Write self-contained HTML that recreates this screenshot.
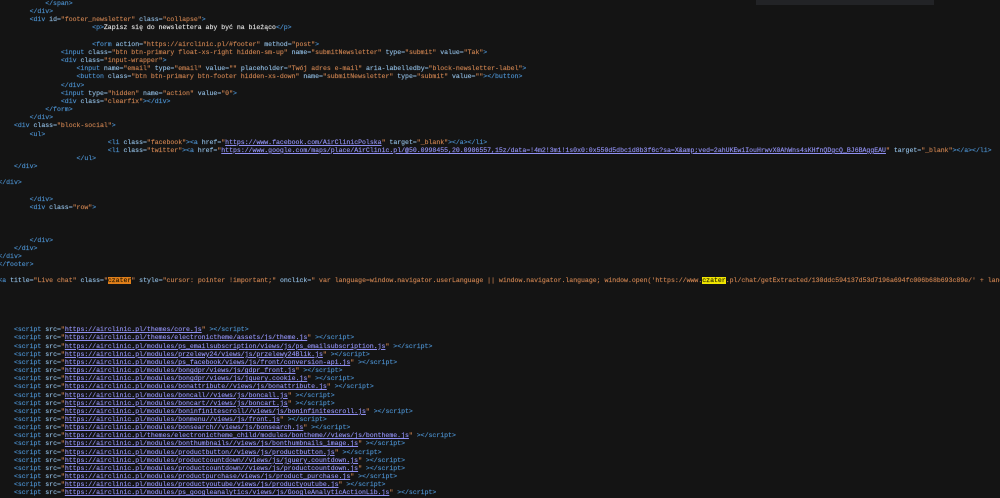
<!DOCTYPE html>
<html><head><meta charset="utf-8"><style>
html,body{margin:0;padding:0;background:#141414;width:1000px;height:497px;overflow:hidden;}
pre{position:absolute;left:-1.7px;top:0px;margin:0;font-family:"Liberation Mono",monospace;font-size:6.53px;line-height:8.15px;color:#d4d4d4;white-space:pre;-webkit-text-stroke:0.15px currentColor;}
.t{color:#4b8fcc}.a{color:#8fbadf}.v{color:#c9804f}.l{color:#8f8ff0;text-decoration:underline}
.w{color:#e0e0e0}
.h1{background:#e07f1a;color:#2a1a00}.h2{background:#f2e600;color:#2a2a00}
#panel{position:absolute;left:756px;top:0;width:178px;height:5px;background:#222326;}
</style></head><body>
<div id="panel"></div>
<pre>            <span class="t">&lt;/span&gt;</span>
        <span class="t">&lt;/div&gt;</span>
        <span class="t">&lt;div</span> <span class="a">id=</span><span class="v">"footer_newsletter"</span> <span class="a">class=</span><span class="v">"collapse"</span><span class="t">&gt;</span>
                        <span class="t">&lt;p&gt;</span><span class="w">Zapisz się do newslettera aby być na bieżąco</span><span class="t">&lt;/p&gt;</span>

                        <span class="t">&lt;form</span> <span class="a">action=</span><span class="v">"https://airclinic.pl/#footer"</span> <span class="a">method=</span><span class="v">"post"</span><span class="t">&gt;</span>
                <span class="t">&lt;input</span> <span class="a">class=</span><span class="v">"btn btn-primary float-xs-right hidden-sm-up"</span> <span class="a">name=</span><span class="v">"submitNewsletter"</span> <span class="a">type=</span><span class="v">"submit"</span> <span class="a">value=</span><span class="v">"Tak"</span><span class="t">&gt;</span>
                <span class="t">&lt;div</span> <span class="a">class=</span><span class="v">"input-wrapper"</span><span class="t">&gt;</span>
                    <span class="t">&lt;input</span> <span class="a">name=</span><span class="v">"email"</span> <span class="a">type=</span><span class="v">"email"</span> <span class="a">value=</span><span class="v">""</span> <span class="a">placeholder=</span><span class="v">"Twój adres e-mail"</span> <span class="a">aria-labelledby=</span><span class="v">"block-newsletter-label"</span><span class="t">&gt;</span>
                    <span class="t">&lt;button</span> <span class="a">class=</span><span class="v">"btn btn-primary btn-footer hidden-xs-down"</span> <span class="a">name=</span><span class="v">"submitNewsletter"</span> <span class="a">type=</span><span class="v">"submit"</span> <span class="a">value=</span><span class="v">""</span><span class="t">&gt;&lt;/button&gt;</span>
                <span class="t">&lt;/div&gt;</span>
                <span class="t">&lt;input</span> <span class="a">type=</span><span class="v">"hidden"</span> <span class="a">name=</span><span class="v">"action"</span> <span class="a">value=</span><span class="v">"0"</span><span class="t">&gt;</span>
                <span class="t">&lt;div</span> <span class="a">class=</span><span class="v">"clearfix"</span><span class="t">&gt;&lt;/div&gt;</span>
            <span class="t">&lt;/form&gt;</span>
        <span class="t">&lt;/div&gt;</span>
    <span class="t">&lt;div</span> <span class="a">class=</span><span class="v">"block-social"</span><span class="t">&gt;</span>
        <span class="t">&lt;ul&gt;</span>
                            <span class="t">&lt;li</span> <span class="a">class=</span><span class="v">"facebook"</span><span class="t">&gt;&lt;a</span> <span class="a">href=</span><span class="v">"</span><span class="l">https://www.facebook.com/AirClinicPolska</span><span class="v">"</span> <span class="a">target=</span><span class="v">"_blank"</span><span class="t">&gt;&lt;/a&gt;&lt;/li&gt;</span>
                            <span class="t">&lt;li</span> <span class="a">class=</span><span class="v">"twitter"</span><span class="t">&gt;&lt;a</span> <span class="a">href=</span><span class="v">"</span><span class="l">https://www.google.com/maps/place/AirClinic.pl/@50.0998455,20.0986557,15z/data=!4m2!3m1!1s0x0:0x550d5dbc1d8b3f6c?sa=X&amp;amp;ved=2ahUKEwiIouHrwvX0AhWns4sKHfnQDgcQ_BJ6BAggEAU</span><span class="v">"</span> <span class="a">target=</span><span class="v">"_blank"</span><span class="t">&gt;&lt;/a&gt;&lt;/li&gt;</span>
                    <span class="t">&lt;/ul&gt;</span>
    <span class="t">&lt;/div&gt;</span>

<span class="t">&lt;/div&gt;</span>

        <span class="t">&lt;/div&gt;</span>
        <span class="t">&lt;div</span> <span class="a">class=</span><span class="v">"row"</span><span class="t">&gt;</span>



        <span class="t">&lt;/div&gt;</span>
    <span class="t">&lt;/div&gt;</span>
<span class="t">&lt;/div&gt;</span>
<span class="t">&lt;/footer&gt;</span>

<span class="t">&lt;a</span> <span class="a">title=</span><span class="v">"Live chat"</span> <span class="a">class=</span><span class="v">"<span class="h1">czater</span>"</span> <span class="a">style=</span><span class="v">"cursor: pointer !important;"</span> <span class="a">onclick=</span><span class="v">" var language=window.navigator.userLanguage || window.navigator.language; window.open('https://www.<span class="h2">czater</span>.pl/chat/getExtracted/130ddc594137d53d7196a694fc006b68b693c89e/' + language</span>





    <span class="t">&lt;script</span> <span class="a">src=</span><span class="v">"</span><span class="l">https://airclinic.pl/themes/core.js</span><span class="v">"</span> <span class="t">&gt;&lt;/script&gt;</span>
    <span class="t">&lt;script</span> <span class="a">src=</span><span class="v">"</span><span class="l">https://airclinic.pl/themes/electronictheme/assets/js/theme.js</span><span class="v">"</span> <span class="t">&gt;&lt;/script&gt;</span>
    <span class="t">&lt;script</span> <span class="a">src=</span><span class="v">"</span><span class="l">https://airclinic.pl/modules/ps_emailsubscription/views/js/ps_emailsubscription.js</span><span class="v">"</span> <span class="t">&gt;&lt;/script&gt;</span>
    <span class="t">&lt;script</span> <span class="a">src=</span><span class="v">"</span><span class="l">https://airclinic.pl/modules/przelewy24/views/js/przelewy24Blik.js</span><span class="v">"</span> <span class="t">&gt;&lt;/script&gt;</span>
    <span class="t">&lt;script</span> <span class="a">src=</span><span class="v">"</span><span class="l">https://airclinic.pl/modules/ps_facebook/views/js/front/conversion-api.js</span><span class="v">"</span> <span class="t">&gt;&lt;/script&gt;</span>
    <span class="t">&lt;script</span> <span class="a">src=</span><span class="v">"</span><span class="l">https://airclinic.pl/modules/bongdpr/views/js/gdpr_front.js</span><span class="v">"</span> <span class="t">&gt;&lt;/script&gt;</span>
    <span class="t">&lt;script</span> <span class="a">src=</span><span class="v">"</span><span class="l">https://airclinic.pl/modules/bongdpr/views/js/jquery.cookie.js</span><span class="v">"</span> <span class="t">&gt;&lt;/script&gt;</span>
    <span class="t">&lt;script</span> <span class="a">src=</span><span class="v">"</span><span class="l">https://airclinic.pl/modules/bonattribute//views/js/bonattribute.js</span><span class="v">"</span> <span class="t">&gt;&lt;/script&gt;</span>
    <span class="t">&lt;script</span> <span class="a">src=</span><span class="v">"</span><span class="l">https://airclinic.pl/modules/boncall//views/js/boncall.js</span><span class="v">"</span> <span class="t">&gt;&lt;/script&gt;</span>
    <span class="t">&lt;script</span> <span class="a">src=</span><span class="v">"</span><span class="l">https://airclinic.pl/modules/boncart//views/js/boncart.js</span><span class="v">"</span> <span class="t">&gt;&lt;/script&gt;</span>
    <span class="t">&lt;script</span> <span class="a">src=</span><span class="v">"</span><span class="l">https://airclinic.pl/modules/boninfinitescroll//views/js/boninfinitescroll.js</span><span class="v">"</span> <span class="t">&gt;&lt;/script&gt;</span>
    <span class="t">&lt;script</span> <span class="a">src=</span><span class="v">"</span><span class="l">https://airclinic.pl/modules/bonmenu//views/js/front.js</span><span class="v">"</span> <span class="t">&gt;&lt;/script&gt;</span>
    <span class="t">&lt;script</span> <span class="a">src=</span><span class="v">"</span><span class="l">https://airclinic.pl/modules/bonsearch//views/js/bonsearch.js</span><span class="v">"</span> <span class="t">&gt;&lt;/script&gt;</span>
    <span class="t">&lt;script</span> <span class="a">src=</span><span class="v">"</span><span class="l">https://airclinic.pl/themes/electronictheme_child/modules/bontheme//views/js/bontheme.js</span><span class="v">"</span> <span class="t">&gt;&lt;/script&gt;</span>
    <span class="t">&lt;script</span> <span class="a">src=</span><span class="v">"</span><span class="l">https://airclinic.pl/modules/bonthumbnails//views/js/bonthumbnails_image.js</span><span class="v">"</span> <span class="t">&gt;&lt;/script&gt;</span>
    <span class="t">&lt;script</span> <span class="a">src=</span><span class="v">"</span><span class="l">https://airclinic.pl/modules/productbutton//views/js/productbutton.js</span><span class="v">"</span> <span class="t">&gt;&lt;/script&gt;</span>
    <span class="t">&lt;script</span> <span class="a">src=</span><span class="v">"</span><span class="l">https://airclinic.pl/modules/productcountdown//views/js/jquery.countdown.js</span><span class="v">"</span> <span class="t">&gt;&lt;/script&gt;</span>
    <span class="t">&lt;script</span> <span class="a">src=</span><span class="v">"</span><span class="l">https://airclinic.pl/modules/productcountdown//views/js/productcountdown.js</span><span class="v">"</span> <span class="t">&gt;&lt;/script&gt;</span>
    <span class="t">&lt;script</span> <span class="a">src=</span><span class="v">"</span><span class="l">https://airclinic.pl/modules/productpurchase/views/js/product_purchase.js</span><span class="v">"</span> <span class="t">&gt;&lt;/script&gt;</span>
    <span class="t">&lt;script</span> <span class="a">src=</span><span class="v">"</span><span class="l">https://airclinic.pl/modules/productyoutube/views/js/productyoutube.js</span><span class="v">"</span> <span class="t">&gt;&lt;/script&gt;</span>
    <span class="t">&lt;script</span> <span class="a">src=</span><span class="v">"</span><span class="l">https://airclinic.pl/modules/ps_googleanalytics/views/js/GoogleAnalyticActionLib.js</span><span class="v">"</span> <span class="t">&gt;&lt;/script&gt;</span>
</pre>
</body></html>
